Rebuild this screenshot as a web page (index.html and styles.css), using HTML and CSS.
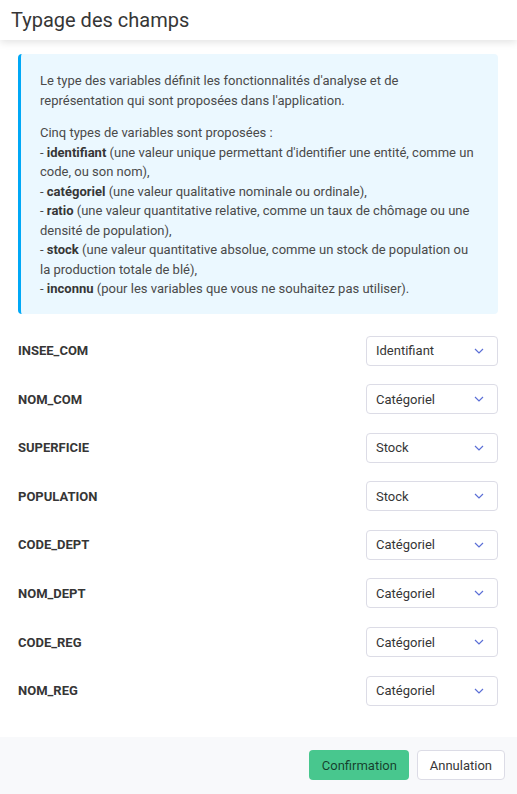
FILE: index.html
```html
<!DOCTYPE html>
<html lang="fr">
<head>
<meta charset="utf-8">
<title>Typage des champs</title>
<link rel="stylesheet" href="styles.css">
</head>
<body>
<div class="card">
  <header class="card-head">
    <h1 class="card-title">Typage des champs</h1>
  </header>
  <section class="card-body">
    <div class="notice">
      <p>Le type des variables définit les fonctionnalités d'analyse et de représentation qui sont proposées dans l'application.</p>
      <p>Cinq types de variables sont proposées :</p>
      <ul class="types">
        <li>- <b>identifiant</b> (une valeur unique permettant d'identifier une entité, comme un code, ou son nom),</li>
        <li>- <b>catégoriel</b> (une valeur qualitative nominale ou ordinale),</li>
        <li>- <b>ratio</b> (une valeur quantitative relative, comme un taux de chômage ou une densité de population),</li>
        <li>- <b>stock</b> (une valeur quantitative absolue, comme un stock de population ou la production totale de blé),</li>
        <li>- <b>inconnu</b> (pour les variables que vous ne souhaitez pas utiliser).</li>
      </ul>
    </div>
    <div class="fields">
      <div class="field"><span class="name">INSEE_COM</span><div class="select"><span>Identifiant</span><svg class="chev" viewBox="0 0 10 6"><path d="M1 1l4 4 4-4"/></svg></div></div>
      <div class="field"><span class="name">NOM_COM</span><div class="select"><span>Catégoriel</span><svg class="chev" viewBox="0 0 10 6"><path d="M1 1l4 4 4-4"/></svg></div></div>
      <div class="field"><span class="name">SUPERFICIE</span><div class="select"><span>Stock</span><svg class="chev" viewBox="0 0 10 6"><path d="M1 1l4 4 4-4"/></svg></div></div>
      <div class="field"><span class="name">POPULATION</span><div class="select"><span>Stock</span><svg class="chev" viewBox="0 0 10 6"><path d="M1 1l4 4 4-4"/></svg></div></div>
      <div class="field"><span class="name">CODE_DEPT</span><div class="select"><span>Catégoriel</span><svg class="chev" viewBox="0 0 10 6"><path d="M1 1l4 4 4-4"/></svg></div></div>
      <div class="field"><span class="name">NOM_DEPT</span><div class="select"><span>Catégoriel</span><svg class="chev" viewBox="0 0 10 6"><path d="M1 1l4 4 4-4"/></svg></div></div>
      <div class="field"><span class="name">CODE_REG</span><div class="select"><span>Catégoriel</span><svg class="chev" viewBox="0 0 10 6"><path d="M1 1l4 4 4-4"/></svg></div></div>
      <div class="field"><span class="name">NOM_REG</span><div class="select"><span>Catégoriel</span><svg class="chev" viewBox="0 0 10 6"><path d="M1 1l4 4 4-4"/></svg></div></div>
    </div>
  </section>
  <footer class="card-foot">
    <button class="btn btn-success">Confirmation</button>
    <button class="btn">Annulation</button>
  </footer>
</div>
</body>
</html>
```

FILE: styles.css
```css
* { box-sizing: border-box; }
html, body { margin: 0; padding: 0; background: #fff; }
body {
  font-family: Roboto, "Liberation Sans", Arial, sans-serif;
  color: #4a4a4a;
  font-size: 13px;
}
.card {
  display: flex;
  flex-direction: column;
  height: 794px;
  width: 517px;
}
.card-head {
  height: 40px;
  display: flex;
  align-items: center;
  padding: 0 11px;
  background: #fff;
  box-shadow: 0 2px 8px rgba(0,0,0,0.12);
  position: relative;
  z-index: 1;
}
.card-title {
  margin: 0;
  font-size: 20px;
  font-weight: 400;
  color: #363636;
  line-height: 1;
}
.card-body {
  flex: 1;
  padding: 14px 19px 0 18px;
}
.notice {
  background: #ebf8ff;
  border-left: 3px solid #00a8f6;
  border-radius: 4px;
  padding: 17px 19px 15px 19px;
  color: #4a4a4a;
  line-height: 19.5px;
}
.notice p { margin: 0 0 13px; }
.notice p + p { margin-bottom: 0; }
.types { list-style: none; margin: 0; padding: 0; }
.notice b { font-weight: 700; color: #363636; }
.fields {
  display: flex;
  flex-direction: column;
  gap: 18.6px;
  margin-top: 22px;
}
.field {
  display: flex;
  align-items: center;
  justify-content: space-between;
  height: 30px;
}
.name {
  font-weight: 700;
  color: #363636;
}
.select {
  width: 132px;
  height: 30px;
  border: 1px solid #dcdce6;
  border-radius: 4px;
  display: flex;
  align-items: center;
  justify-content: space-between;
  padding: 0 13px 0 9px;
  color: #363636;
  background: #fff;
}
.chev {
  width: 10px;
  height: 6px;
  fill: none;
  stroke: #5b6fd6;
  stroke-width: 1.2;
}
.card-foot {
  height: 57px;
  background: #f8f9fb;
  display: flex;
  justify-content: flex-end;
  align-items: flex-start;
  gap: 8px;
  padding: 13px 12px 0;
}
.btn {
  font-family: inherit;
  font-size: 13px;
  height: 30px;
  padding: 0 12px;
  border: 1px solid #dcdce6;
  border-radius: 4px;
  background: #fff;
  color: #363636;
}
.btn-success {
  background: #48c78e;
  border-color: transparent;
  color: rgba(0,0,0,0.7);
  width: 100px;
}
```
